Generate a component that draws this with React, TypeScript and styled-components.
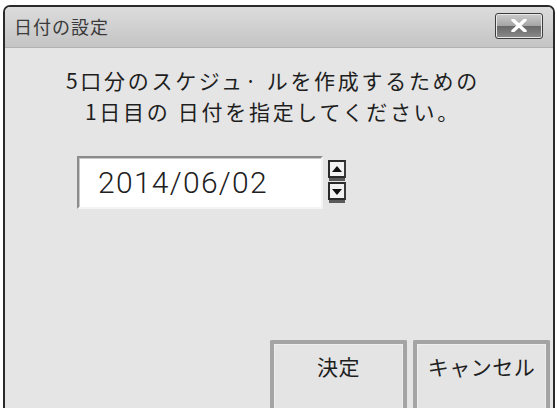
import React from "react";
import styled, { createGlobalStyle } from "styled-components";

const Global = createGlobalStyle`
  html, body { margin: 0; padding: 0; background: #ffffff; }
  body { font-family: "Noto Sans CJK JP", "Liberation Sans", sans-serif; }
`;

const Window = styled.div`
  margin: 5px 0 0 3px;
  width: 548px;
  height: 403px;
  border: 2px solid #2a2a2a;
  border-bottom: none;
  border-radius: 7px 7px 0 0;
  display: flex;
  flex-direction: column;
  overflow: hidden;
  background: #e5e5e5;
`;

const TitleBar = styled.div`
  height: 40px;
  flex: none;
  display: flex;
  align-items: center;
  justify-content: space-between;
  padding: 0 10px 0 9px;
  background: linear-gradient(#dcdcdc, #c4c4c4);
  border-bottom: 1px solid #b0b0b0;
`;

const Title = styled.span`
  font-size: 18px;
  color: #3a3a3a;
  letter-spacing: 1px;
  margin-top: -2px;
`;

const CloseButton = styled.div`
  width: 48px;
  height: 26px;
  box-sizing: border-box;
  border: 1px solid #3c3c3c;
  border-radius: 3px;
  background: linear-gradient(#cccccc 0%, #a4a4a4 50%, #686868 51%, #8a8a8a 100%);
  box-shadow: inset 0 0 0 1px #e8e8e8;
  display: flex;
  align-items: center;
  justify-content: center;
  margin-top: -3px;
`;

const Body = styled.div`
  flex: 1;
  display: flex;
  flex-direction: column;
  padding: 17px 0 0 0;
`;

const Message = styled.div`
  text-align: center;
  font-size: 21px;
  line-height: 31px;
  color: #1e1e1e;
  padding-right: 12px;
  letter-spacing: 2.7px;
`;

const DateRow = styled.div`
  display: flex;
  align-items: flex-start;
  gap: 5px;
  margin: 29px 0 0 72px;
`;

const DateField = styled.div`
  width: 246px;
  height: 53px;
  box-sizing: border-box;
  background: #ffffff;
  border: 2px solid #8c8c8c;
  border-right-color: #f4f4f4;
  border-bottom-color: #f4f4f4;
  box-shadow: inset 1px 1px 0 #c8c8c8;
  display: flex;
  align-items: center;
  padding: 0 0 1px 19px;
  font-family: Roboto, "Liberation Sans", sans-serif;
  font-weight: 300;
  font-size: 30px;
  color: #202020;
  letter-spacing: 1.3px;
`;

const Spinner = styled.div`
  display: flex;
  flex-direction: column;
  gap: 4px;
  padding-top: 4px;
`;

const SpinButton = styled.div`
  width: 18px;
  height: 18px;
  box-sizing: border-box;
  border: 2px solid #2a2a2a;
  border-right-color: #3a3a3a;
  background: #f2f2f2;
  display: flex;
  align-items: center;
  justify-content: center;
  box-shadow: 0 4px 0 -1px #5a5a5a;
`;

const Arrow = styled.div<{ $up?: boolean }>`
  width: 0;
  height: 0;
  border-left: 5px solid transparent;
  border-right: 5px solid transparent;
  ${(p) =>
    p.$up
      ? "border-bottom: 6px solid #111; margin-top: -1px;"
      : "border-top: 6px solid #111; margin-top: 1px;"}
`;

const Spacer = styled.div`
  flex: 1;
`;

const ButtonRow = styled.div`
  display: flex;
  justify-content: flex-end;
  gap: 6px;
  padding: 0 3px 0 0;
`;

const DialogButton = styled.div`
  width: 137px;
  height: 70px;
  box-sizing: border-box;
  border: 4px solid #a4a4a4;
  border-bottom: none;
  border-radius: 2px 2px 0 0;
  background: #e4e4e4;
  box-shadow: inset 0 0 0 1px #eeeeee;
  display: flex;
  align-items: flex-start;
  justify-content: center;
  padding-top: 7px;
  font-size: 21px;
  color: #1e1e1e;
  letter-spacing: 0.5px;
`;

export default function App() {
  return (
    <>
      <Global />
      <Window>
        <TitleBar>
          <Title>日付の設定</Title>
          <CloseButton>
            <svg width="16" height="13" viewBox="0 0 16 13">
              <path
                d="M2 1 L14 12 M14 1 L2 12"
                stroke="#ffffff"
                strokeWidth="3.4"
                strokeLinecap="round"
              />
            </svg>
          </CloseButton>
        </TitleBar>
        <Body>
          <Message>
            5口分のスケジュ· ルを作成するための
            <br />
            1日目の 日付を指定してください。
          </Message>
          <DateRow>
            <DateField>2014/06/02</DateField>
            <Spinner>
              <SpinButton>
                <Arrow $up />
              </SpinButton>
              <SpinButton>
                <Arrow />
              </SpinButton>
            </Spinner>
          </DateRow>
          <Spacer />
          <ButtonRow>
            <DialogButton>決定</DialogButton>
            <DialogButton>キャンセル</DialogButton>
          </ButtonRow>
        </Body>
      </Window>
    </>
  );
}
